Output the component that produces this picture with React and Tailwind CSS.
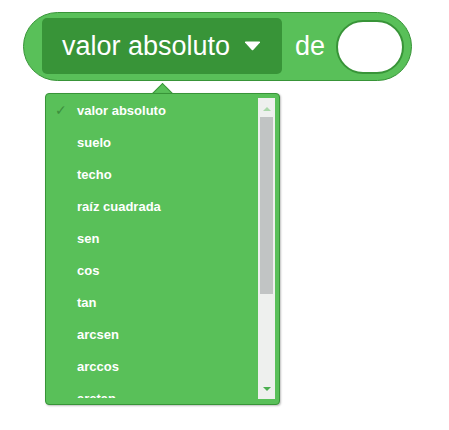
const items = [
  'valor absoluto',
  'suelo',
  'techo',
  'raíz cuadrada',
  'sen',
  'cos',
  'tan',
  'arcsen',
  'arccos',
  'arctan',
];

export default function App() {
  const selected = 'valor absoluto';

  return (
    <div className="relative w-[449px] h-[430px] bg-white font-['Liberation_Sans',Arial,sans-serif]">
      {/* block */}
      <div className="absolute left-[23px] top-[12px] flex h-[69px] w-[389px] items-center rounded-full border border-[#389438] bg-[#59c059] pl-[18px] pr-[7px]">
        <div className="flex h-[56px] w-[240px] items-center rounded-[5px] bg-[#389438] pl-[20px] -mt-px">
          <span className="text-[27px] leading-none text-white">valor absoluto</span>
          <svg className="ml-[14px]" width="17" height="10" viewBox="0 0 17 10">
            <path d="M1 1.5 Q0.5 0.5 2 0.5 L15 0.5 Q16.5 0.5 16 1.5 L9.2 9 Q8.5 9.7 7.8 9 Z" fill="#fff" />
          </svg>
        </div>
        <span className="ml-[13px] text-[27px] leading-none text-white -mt-px">de</span>
        <div className="ml-auto h-[54px] w-[68px] rounded-full border-2 border-[#389438] bg-white" />
      </div>

      {/* dropdown arrow */}
      <div className="absolute left-[155px] top-[86px] h-[15px] w-[15px] rotate-45 border-l border-t border-[#389438] bg-[#59c059]" />

      {/* dropdown menu */}
      <div className="absolute left-[45px] top-[93px] h-[312px] w-[235px] rounded-[4px] border border-[#389438] bg-[#59c059] shadow-[1px_1px_2px_rgba(0,0,0,0.25)]">
        <div className="mt-[1px] flex h-[303px] flex-col overflow-hidden">
          {items.map((item) => (
            <div key={item} className="relative flex h-[32px] shrink-0 items-center pl-[31px] text-[13px] font-bold text-white">
              {item === selected && (
                <span className="absolute left-[9px] top-[8px] text-[14px] font-normal leading-none text-[#3d8f3d] font-['DejaVu_Sans',sans-serif]">
                  ✓
                </span>
              )}
              {item}
            </div>
          ))}
        </div>

        {/* scrollbar */}
        <div className="absolute right-[4px] top-[4px] flex h-[301px] w-[17px] flex-col items-center bg-[#eef0ee]">
          <svg className="mt-[9px]" width="8" height="4" viewBox="0 0 8 4">
            <path d="M0 4 L4 0 L8 4 Z" fill="#a9d8a9" />
          </svg>
          <div className="mt-[6px] h-[177px] w-[13px] bg-[#c1c4c4]" />
          <svg className="mt-auto mb-[8px]" width="8" height="4" viewBox="0 0 8 4">
            <path d="M0 0 L8 0 L4 4 Z" fill="#4caf50" />
          </svg>
        </div>
      </div>
    </div>
  );
}
